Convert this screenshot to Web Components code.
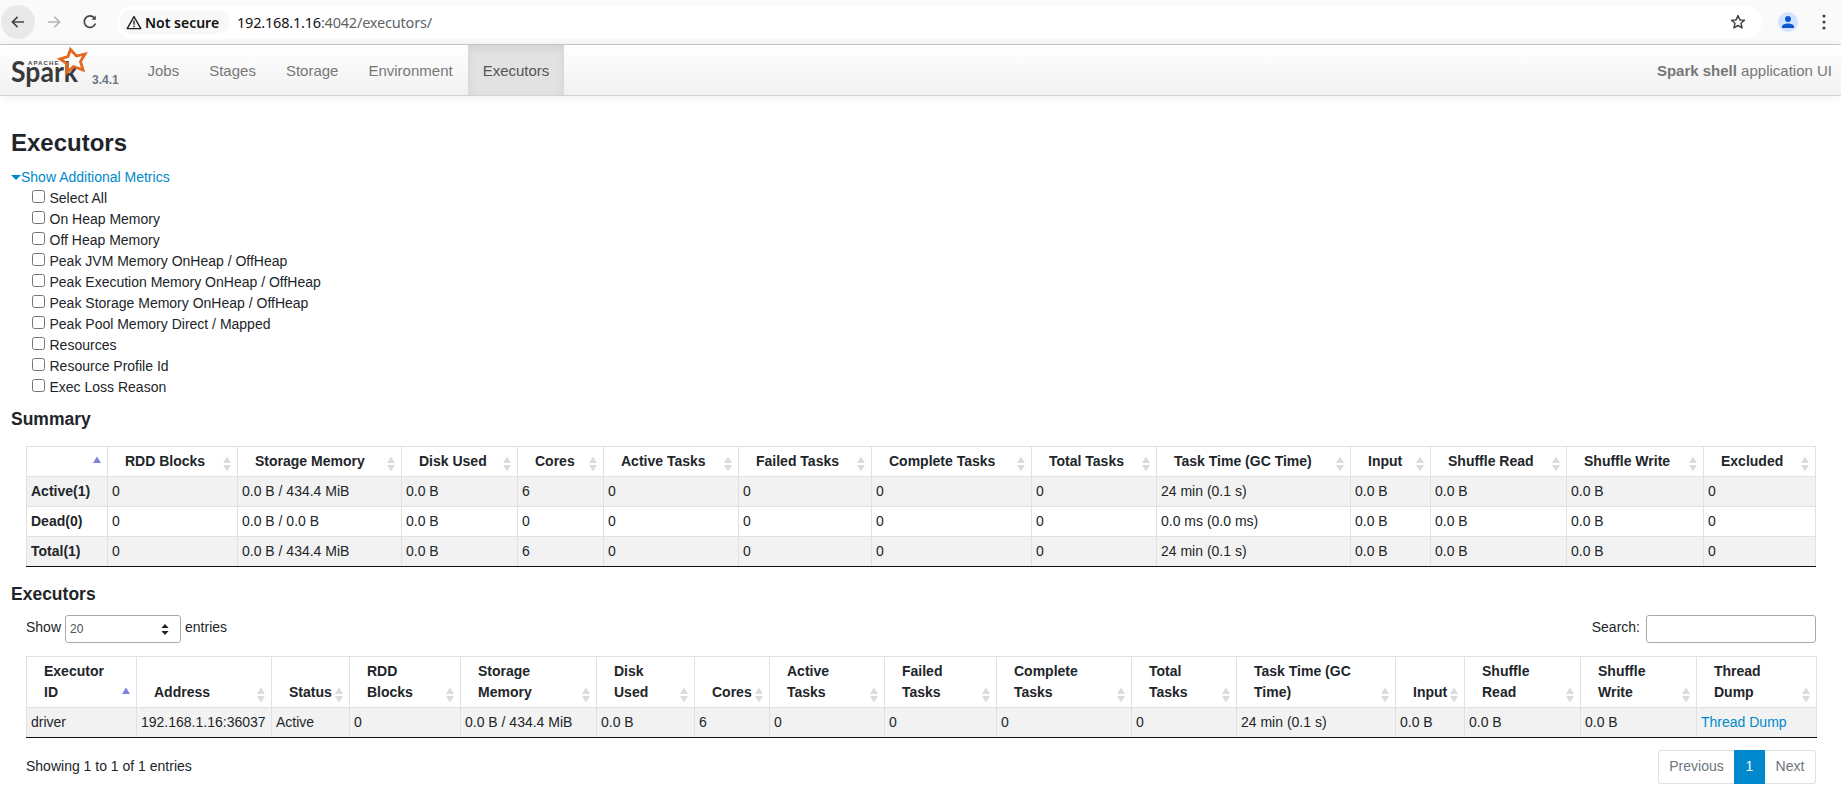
<!DOCTYPE html>
<html>
<head>
<meta charset="utf-8">
<title>Executors</title>
<style>
  html, body { margin: 0; height: 790px; overflow: hidden; background: #fff; }
  body { font: 14px/21px "Liberation Sans", Arial, sans-serif; color: #212529; }
  main { display: block; padding: 31.5px 25px 0 11px; }
</style>
</head>
<body>
<chrome-toolbar host-part="192.168.1.16" rest-part=":4042/executors/"></chrome-toolbar>
<spark-navbar version="3.4.1" active="Executors" tabs="Jobs,Stages,Storage,Environment,Executors">
  <b>Spark shell</b> application UI
</spark-navbar>
<main>
  <page-title>Executors</page-title>
  <metric-toggles label="Show Additional Metrics" items="Select All|On Heap Memory|Off Heap Memory|Peak JVM Memory OnHeap / OffHeap|Peak Execution Memory OnHeap / OffHeap|Peak Storage Memory OnHeap / OffHeap|Peak Pool Memory Direct / Mapped|Resources|Resource Profile Id|Exec Loss Reason"></metric-toggles>
  <section-title style="margin-top:11px">Summary</section-title>
  <data-grid style="margin-top:16px" bold-first
    widths="81,130,164,116,86,135,133,160,125,194,80,136,137,112"
    headers="|RDD Blocks|Storage Memory|Disk Used|Cores|Active Tasks|Failed Tasks|Complete Tasks|Total Tasks|Task Time (GC Time)|Input|Shuffle Read|Shuffle Write|Excluded"
    rows="Active(1)|0|0.0 B / 434.4 MiB|0.0 B|6|0|0|0|0|24 min (0.1 s)|0.0 B|0.0 B|0.0 B|0;Dead(0)|0|0.0 B / 0.0 B|0.0 B|0|0|0|0|0|0.0 ms (0.0 ms)|0.0 B|0.0 B|0.0 B|0;Total(1)|0|0.0 B / 434.4 MiB|0.0 B|6|0|0|0|0|24 min (0.1 s)|0.0 B|0.0 B|0.0 B|0"></data-grid>
  <section-title style="margin-top:17px">Executors</section-title>
  <table-controls style="margin-top:10px"></table-controls>
  <data-grid style="margin-top:13px" link-last
    widths="110,135,78,111,136,98,75,115,112,135,105,159,69,116,116,120"
    headers="Executor ID|Address|Status|RDD Blocks|Storage Memory|Disk Used|Cores|Active Tasks|Failed Tasks|Complete Tasks|Total Tasks|Task Time (GC Time)|Input|Shuffle Read|Shuffle Write|Thread Dump"
    rows="driver|192.168.1.16:36037|Active|0|0.0 B / 434.4 MiB|0.0 B|6|0|0|0|0|24 min (0.1 s)|0.0 B|0.0 B|0.0 B|Thread Dump"></data-grid>
  <table-footer style="margin-top:12px" info="Showing 1 to 1 of 1 entries"></table-footer>
</main>

<script>
// browser chrome above the page
class ChromeToolbar extends HTMLElement {
  connectedCallback() {
    this.attachShadow({ mode: 'open' }).innerHTML = `
      <style>
        :host { display: flex; align-items: center; height: 44px; background: #fafafa; border-bottom: 1px solid #c9c9c9; box-sizing: content-box; font-family: "Noto Sans", sans-serif; }
        .btn { width: 34px; height: 34px; margin-left: 1px; margin-right: 1px; display: flex; align-items: center; justify-content: center; flex: none; border-radius: 50%; }
        .back { background: #e9e9e9; }
        .group { display: flex; flex: none; }
        .url { margin-left: 9px; flex: 1; height: 34px; background: #fff; border-radius: 17px; display: flex; align-items: center; padding-left: 3px; }
        .secure { height: 24px; width: 109px; box-sizing: border-box; padding-left: 6px; display: flex; align-items: center; gap: 3px; background: #f8f8f8; border-radius: 12px; font-size: 14px; font-weight: 600; color: #111; }
        .addr { margin-left: 8px; font: 14.5px "Noto Sans", sans-serif; color: #5f6368; letter-spacing: -.2px; }
        .addr b { font-weight: 400; color: #111; }
        .star { margin-left: auto; display: flex; margin-right: 16px; }
        .right { display: flex; align-items: center; margin-left: 16px; margin-right: 15px; gap: 24px; }
        .avatar { width: 20px; height: 20px; border-radius: 50%; background: #d3e3fd; display: flex; align-items: center; justify-content: center; }
      </style>
      <div class="group">
        <span class="btn back"><svg width="16" height="16" viewBox="0 0 16 16" fill="none" stroke="#444" stroke-width="1.7"><path d="M14 8H2.6M7.6 2.8L2.4 8l5.2 5.2"/></svg></span>
        <span class="btn"><svg width="16" height="16" viewBox="0 0 16 16" fill="none" stroke="#b4b4b4" stroke-width="1.7"><path d="M2 8h11.4M8.4 2.8L13.6 8l-5.2 5.2"/></svg></span>
        <span class="btn"><svg width="16" height="16" viewBox="0 0 16 16" fill="none" stroke="#444" stroke-width="1.7"><path d="M13.4 9.4A5.7 5.7 0 1 1 12.2 3.8"/><path d="M13.8 1.6v4.2H9.6" stroke="none" fill="#444"/></svg></span>
      </div>
      <div class="url">
        <span class="secure">
          <svg width="16" height="15" viewBox="0 0 16 15" fill="none" stroke="#222" stroke-width="1.4"><path d="M8 1.6L1.2 13.6h13.6z" stroke-linejoin="round"/><path d="M8 5.6v4.2M8 10.8v1.4"/></svg>
          Not secure
        </span>
        <span class="addr"><b>${this.getAttribute('host-part')}</b>${this.getAttribute('rest-part')}</span>
        <span class="star"><svg width="16" height="16" viewBox="0 0 16 16" fill="none" stroke="#444" stroke-width="1.5" stroke-linejoin="round"><path d="M8 1.6l1.9 4.3 4.6.4-3.5 3 1.1 4.6L8 11.5l-4.1 2.4L5 9.3l-3.5-3 4.6-.4z"/></svg></span>
      </div>
      <div class="right">
        <span class="avatar"><svg width="14" height="14" viewBox="0 0 14 14" fill="#0b57d0"><circle cx="7" cy="4" r="3"/><path d="M1 13v-1.4C1 9.6 4.4 8.6 7 8.6s6 1 6 3V13z"/></svg></span>
        <svg width="4" height="16" viewBox="0 0 4 16" fill="#444"><circle cx="2" cy="2" r="1.6"/><circle cx="2" cy="8" r="1.6"/><circle cx="2" cy="14" r="1.6"/></svg>
      </div>`
  }
}

// top bar of the spark ui
class SparkNavbar extends HTMLElement {
  connectedCallback() {
    const active = this.getAttribute('active')
    const tabs = this.getAttribute('tabs').split(',')
      .map(t => `<a class="${t === active ? 'active' : ''}">${t}</a>`).join('')
    this.attachShadow({ mode: 'open' }).innerHTML = `
      <style>
        :host { display: flex; height: 50px; background: linear-gradient(#fff, #f1f1f1); border-bottom: 1px solid #d4d4d4; box-shadow: 0 1px 10px rgba(0,0,0,.07); font-size: 15px; color: #777; }
        .brand { position: relative; width: 132.5px; flex: none; }
        .brand svg { position: absolute; left: 0; top: 0; }
        .version { position: absolute; left: 92px; top: 27px; font-size: 12px; line-height: 16px; font-weight: 700; color: #6c7480; }
        nav { display: flex; }
        a { display: flex; align-items: center; padding: 0 15px; color: #777; }
        a.active { background: #e2e2e2; color: #555; box-shadow: inset 0 3px 8px rgba(0,0,0,.08); }
        .app { margin-left: auto; padding-right: 9px; display: flex; align-items: center; white-space: pre; }
        ::slotted(b) { font-weight: 700; }
      </style>
      <div class="brand">
        <svg width="92" height="46" viewBox="0 0 92 46">
          <text x="28" y="20" font-family="Liberation Sans" font-size="6" font-weight="700" letter-spacing="1.1" fill="#4a4a4a">APACHE</text>
          <text x="11" y="37" font-family="Lato" font-weight="700" font-size="28" textLength="67" lengthAdjust="spacingAndGlyphs" fill="#3a3a3a">Spark</text>
          <path d="M70.5 4.5L76.5 11l8.5-2-4.5 7.5L83 25l-9.5-3.5-6 5.5 0-8L60 14l8-2.5z" fill="none" stroke="#e2691f" stroke-width="2.8"/>
        </svg>
        <span class="version">${this.getAttribute('version')}</span>
      </div>
      <nav>${tabs}</nav>
      <div class="app"><slot></slot></div>`
  }
}

class PageTitle extends HTMLElement {
  connectedCallback() {
    this.attachShadow({ mode: 'open' }).innerHTML = `
      <style>:host { display: block; font-size: 24px; line-height: 29px; font-weight: 700; color: #212529; margin-bottom: 10px; }</style>
      <slot></slot>`
  }
}

class SectionTitle extends HTMLElement {
  connectedCallback() {
    this.attachShadow({ mode: 'open' }).innerHTML = `
      <style>:host { display: block; font-size: 17.5px; line-height: 21px; font-weight: 700; color: #212529; }</style>
      <slot></slot>`
  }
}

// the collapsible list of checkboxes
class MetricToggles extends HTMLElement {
  connectedCallback() {
    const items = this.getAttribute('items').split('|')
      .map(i => `<label><input type="checkbox"><span>${i}</span></label>`).join('')
    this.attachShadow({ mode: 'open' }).innerHTML = `
      <style>
        :host { display: block; }
        .toggle { display: flex; align-items: center; color: #0088cc; }
        .arrow { width: 0; height: 0; border: 5px solid transparent; border-top-color: #0088cc; border-bottom: 0; margin-right: 0; }
        .list { padding-left: 21px; }
        label { display: flex; align-items: center; height: 21px; }
        input { width: 13px; height: 13px; margin: -3px 5px 0 -.5px; }
      </style>
      <div class="toggle"><span class="arrow"></span>${this.getAttribute('label')}</div>
      <div class="list">${items}</div>`
  }
}

// bordered table with the datatables sort arrows
class DataGrid extends HTMLElement {
  connectedCallback() {
    const widths = this.getAttribute('widths').split(',').map(Number)
    const total = widths.reduce((a, b) => a + b, 0)
    const cols = widths.map(w => `<col style="width:${w}px">`).join('')
    const ths = this.getAttribute('headers').split('|').map((h, i) => `
      <th>${h}<svg class="sort" width="8" height="16" viewBox="0 0 8 16">
        <path d="M4 0.5L8 7H0z" fill="${i === 0 ? '#8181dc' : '#dcdcdc'}"/>
        ${i === 0 ? '' : '<path d="M4 15.5L0 9h8z" fill="#dcdcdc"/>'}
      </svg></th>`).join('')
    const boldFirst = this.hasAttribute('bold-first')
    const linkLast = this.hasAttribute('link-last')
    const rows = this.getAttribute('rows').split(';').map(r => {
      const cells = r.split('|')
      return '<tr>' + cells.map((c, i) => {
        if (boldFirst && i === 0) return `<td><b>${c}</b></td>`
        if (linkLast && i === cells.length - 1) return `<td><a>${c}</a></td>`
        return `<td>${c}</td>`
      }).join('') + '</tr>'
    }).join('')
    this.attachShadow({ mode: 'open' }).innerHTML = `
      <style>
        :host { display: block; margin-left: 15px; }
        table { border-collapse: collapse; table-layout: fixed; width: ${total}px; }
        th, td { border: 1px solid #dee2e6; padding: 4px; line-height: 21px; text-align: left; }
        th { position: relative; padding: 4px 21px 4px 17px; vertical-align: bottom; font-weight: 700; }
        td { white-space: nowrap; }
        .sort { position: absolute; right: 6px; bottom: 4px; }
        tbody tr:nth-child(odd) td { background: #f2f2f2; }
        tbody tr:last-child td { border-bottom-color: #111; }
        a { color: #0088cc; }
      </style>
      <table><colgroup>${cols}</colgroup><thead><tr>${ths}</tr></thead><tbody>${rows}</tbody></table>`
  }
}

// page length select and search box
class TableControls extends HTMLElement {
  connectedCallback() {
    this.attachShadow({ mode: 'open' }).innerHTML = `
      <style>
        :host { display: flex; justify-content: space-between; align-items: center; margin-left: 15px; height: 28px; }
        .side { display: flex; align-items: center; }
        .pick { position: relative; margin: 0 4px 0 4px; width: 116px; height: 28px; }
        select { appearance: none; -webkit-appearance: none; width: 100%; height: 100%; box-sizing: border-box; border: 1px solid #aaa; border-radius: 3px; background: #fff; padding: 1px 0 0 4px; font: 12px "Liberation Sans", sans-serif; color: #495057; }
        .pick svg { position: absolute; right: 12px; top: 9px; }
        input { width: 170px; height: 28px; box-sizing: border-box; border: 1px solid #aaa; border-radius: 3px; margin-left: 6px; background: #fff; }
        .t { position: relative; top: -1px; }
      </style>
      <div class="side"><span class="t">Show</span>
        <span class="pick"><select><option>20</option></select>
          <svg width="8" height="11" viewBox="0 0 8 11" fill="#222"><path d="M4 0l3.6 4H.4zM4 11L.4 7h7.2z"/></svg></span>
        <span class="t">entries</span></div>
      <div class="side"><span class="t">Search:</span><input type="text"></div>`
  }
}

class TableFooter extends HTMLElement {
  connectedCallback() {
    this.attachShadow({ mode: 'open' }).innerHTML = `
      <style>
        :host { display: flex; justify-content: space-between; align-items: center; margin-left: 15px; }
        ul { display: flex; margin: 0; padding: 0; list-style: none; height: 34px; }
        li { box-sizing: border-box; display: flex; align-items: center; justify-content: center; border: 1px solid #dee2e6; color: #6c757d; }
        li:first-child { width: 76px; border-right: 0; border-radius: 3px 0 0 3px; }
        li:last-child { width: 51px; border-left: 0; border-radius: 0 3px 3px 0; }
        li.on { width: 31px; background: #0088cc; border-color: #0088cc; color: #fff; }
      </style>
      <span>${this.getAttribute('info')}</span>
      <ul><li>Previous</li><li class="on">1</li><li>Next</li></ul>`
  }
}

customElements.define('chrome-toolbar', ChromeToolbar)
customElements.define('spark-navbar', SparkNavbar)
customElements.define('page-title', PageTitle)
customElements.define('section-title', SectionTitle)
customElements.define('metric-toggles', MetricToggles)
customElements.define('data-grid', DataGrid)
customElements.define('table-controls', TableControls)
customElements.define('table-footer', TableFooter)
</script>
</body>
</html>
